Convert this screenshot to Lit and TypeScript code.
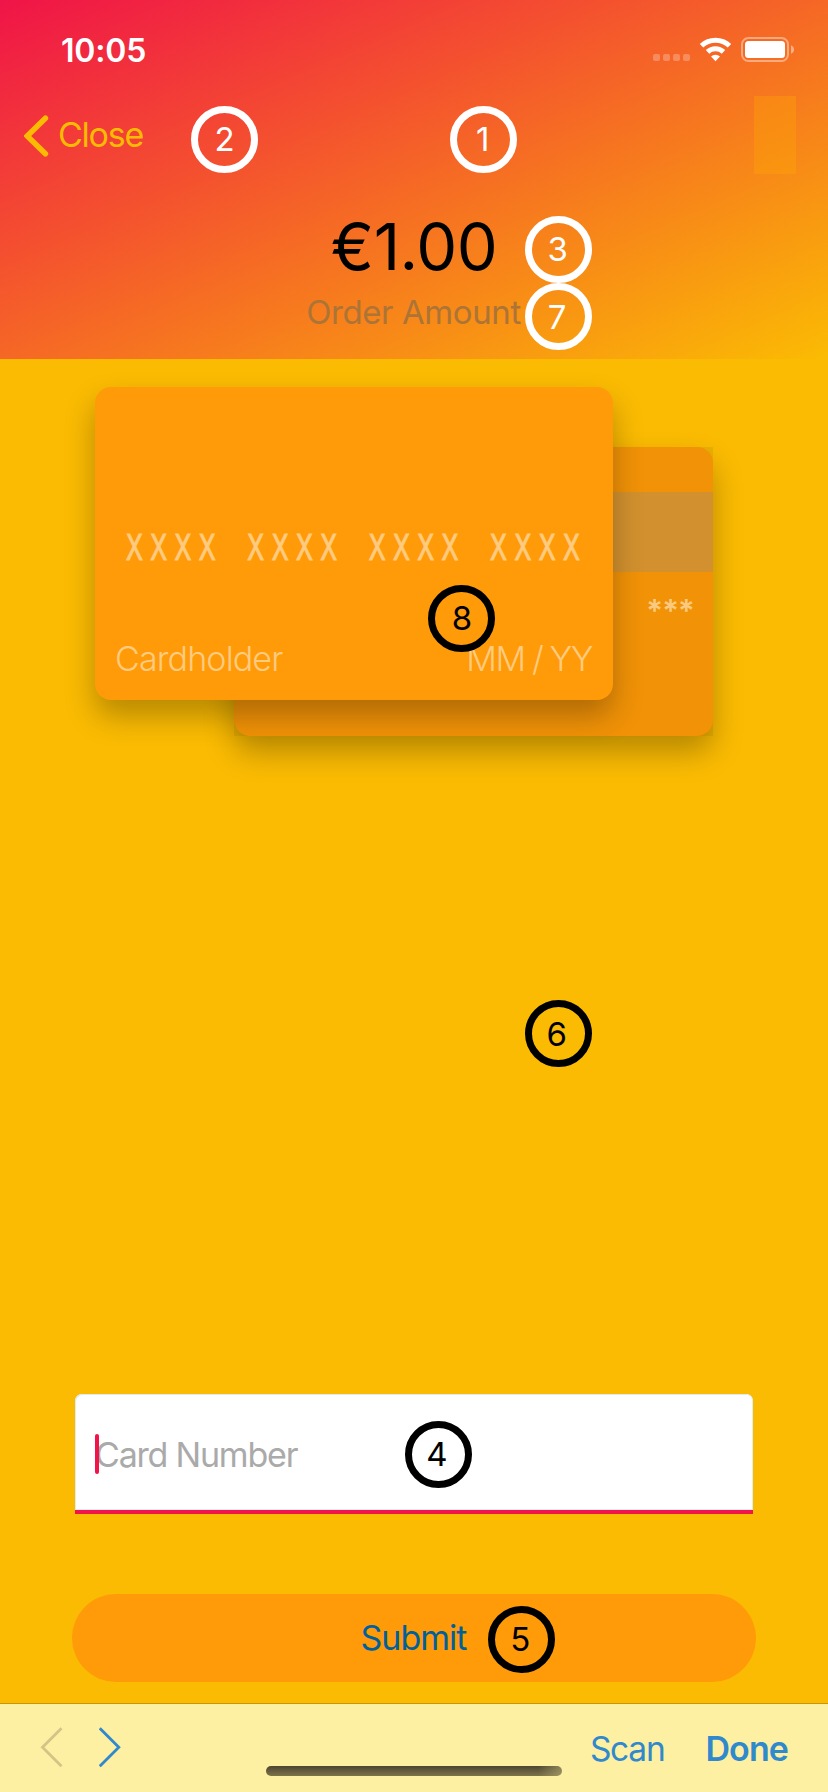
import { LitElement, html, css } from "lit";
import { customElement } from "lit/decorators.js";
import { styleMap } from "lit/directives/style-map.js";

interface Marker { n: number; x: number; y: number; dx: number; dark?: boolean }

const markers: Marker[] = [
  { n: 1, x: 483.7, y: 139.3, dx: -1 },
  { n: 2, x: 224.5, y: 139.3, dx: 0 },
  { n: 3, x: 558.2, y: 249.2, dx: -0.5 },
  { n: 7, x: 558.5, y: 316.7, dx: -1.5 },
  { n: 8, x: 461.5, y: 618, dx: 0.5, dark: true },
  { n: 6, x: 558.3, y: 1033.5, dx: -1.5, dark: true },
  { n: 4, x: 438.5, y: 1454.3, dx: -1.5, dark: true },
  { n: 5, x: 521.3, y: 1639.3, dx: -1, dark: true },
];

@customElement("app-root")
export class AppRoot extends LitElement {
  static styles = css`
    :host {
      display: flex;
      flex-direction: column;
      position: relative;
      width: 828px;
      height: 1792px;
      overflow: hidden;
      background: #fbbb03;
      font-family: Inter, "Liberation Sans", sans-serif;
      font-size: 34px;
      line-height: 40px;
      white-space: nowrap;
    }
    * { box-sizing: border-box; }
    svg { display: block; flex: none; }
    header {
      height: 359px;
      display: flex;
      flex-direction: column;
      align-items: center;
      background: linear-gradient(to bottom right, #f01448, #fbbb03);
    }
    .status {
      align-self: stretch;
      height: 96px;
      padding: 30px 33px 0 61px;
      display: flex;
      justify-content: space-between;
      color: #fff;
      font-size: 32px;
      font-weight: 600;
    }
    .status span { padding-top: 1px; letter-spacing: -0.2px; }
    .nav {
      align-self: stretch;
      height: 78px;
      padding: 0 32px 0 24px;
      display: flex;
      justify-content: space-between;
      color: #fbbb03;
    }
    .back { display: flex; align-items: center; gap: 9px; letter-spacing: -1.25px; }
    .back svg { margin-top: 1px; }
    .action { width: 42px; background: rgba(255, 172, 0, 0.3); }
    .amount {
      margin-top: 33px;
      font-size: 65px;
      line-height: 80px;
      letter-spacing: -0.5px;
      color: #000;
    }
    .caption {
      margin: 5px 1px 0 0;
      font-size: 33px;
      letter-spacing: -0.4px;
      color: #ac7437;
    }
    main { flex: 1; display: flex; flex-direction: column; padding-top: 28px; }
    .cards {
      display: grid;
      justify-items: start;
      align-items: start;
      padding-left: 95px;
      height: 1007px;
    }
    .card { grid-area: 1 / 1; border-radius: 16px; box-shadow: 0 16px 30px rgba(0, 0, 0, 0.27); }
    .rear { width: 479px; height: 289px; margin: 60px 0 0 139px; background: #ff9b08; }
    .shade { height: 289px; padding-top: 45px; background: rgba(0, 0, 0, 0.055); text-align: right; }
    .stripe { height: 80px; background: rgba(130, 143, 148, 0.28); }
    .cvv { margin: 19px 19px 0 0; font-size: 31px; font-weight: 600; letter-spacing: -0.8px; color: #fbca81; }
    .front {
      width: 518px;
      height: 313px;
      padding: 143px 19px 0 20px;
      background: #ff9b08;
      color: #ffcb80;
      font-weight: 350;
    }
    .number {
      margin-left: 10.5px;
      width: 600px;
      font: 400 38px/40px "Liberation Mono", monospace;
      letter-spacing: 10px;
      -webkit-text-stroke: 0.9px #ffcb80;
      transform: scaleX(0.74);
      transform-origin: left;
    }
    .holder { display: flex; justify-content: space-between; margin-top: 69px; letter-spacing: -0.85px; }
    .expiry { margin-right: 2px; letter-spacing: -1.4px; word-spacing: -1px; }
    .field {
      width: 678px;
      height: 120px;
      margin-left: 75px;
      padding: 4px 20px 0;
      display: flex;
      align-items: center;
      background: #fff;
      border-bottom: 4px solid #f01448;
      border-radius: 7px 7px 0 0;
      box-shadow: inset 1px 1px #d9edf3, inset -1px -1px #d9edf3;
      color: #aaa;
      letter-spacing: -1.2px;
    }
    .caret { width: 4px; height: 40px; border-radius: 2px; background: #f01448; z-index: 1; }
    .field span { margin: 1px 0 0 -4px; }
    .submit {
      width: 684px;
      height: 88px;
      margin: 80px 0 0 72px;
      padding: 0 1px 1px 0;
      display: flex;
      align-items: center;
      justify-content: center;
      border-radius: 44px;
      background: #ff9b08;
      color: #00609c;
      letter-spacing: -1px;
    }
    footer {
      height: 89px;
      padding: 23px 40px 0;
      display: flex;
      align-items: flex-start;
      border-top: 1px solid #c8960a;
      background: #fdf0a2;
      color: #3088cd;
    }
    .next { margin-left: 36px; }
    .scan { margin-left: auto; padding-top: 2px; font-size: 33.5px; letter-spacing: -1.25px; }
    .done { margin-left: 41px; padding-top: 2px; font-weight: 600; letter-spacing: -0.9px; }
    .home {
      position: absolute;
      left: 266px;
      top: 1766px;
      width: 296px;
      height: 10px;
      border-radius: 5px;
      background:
        linear-gradient(to right, transparent 92%, rgba(175, 165, 110, 0.65)),
        linear-gradient(#4c4632, #7d7249);
    }
    .marker {
      position: absolute;
      width: 67px;
      height: 67px;
      margin: -33.5px 0 0 -33.5px;
      border: 7px solid;
      border-radius: 50%;
      display: flex;
      align-items: center;
      justify-content: center;
      color: #fff;
      font-size: 33px;
    }
    .marker.dark { color: #000; }
  `;

  render() {
    return html`
      <header>
        <div class="status">
          <span>10:05</span>
          <svg width="142" height="40" viewBox="653 30 142 40" fill="#fff">
            <g fill-opacity=".25">
              <rect x="653" y="54" width="7" height="7" rx="2" />
              <rect x="663" y="54" width="7" height="7" rx="2" />
              <rect x="673" y="54" width="7" height="7" rx="2" />
              <rect x="683" y="54" width="7" height="7" rx="2" />
            </g>
            <g fill="none" stroke="#fff" stroke-width="5">
              <path d="M701.5 45.8a20.2 20.2 0 0 1 28 0" />
              <path d="M707.5 51.9a11.7 11.7 0 0 1 16 0" />
            </g>
            <path d="M711 56.6a6.6 6.6 0 0 1 9 0L715.5 61.2z" />
            <rect x="742" y="38" width="46" height="23" rx="6.5" fill="none" stroke="#fff" stroke-opacity=".42" stroke-width="2" />
            <rect x="745" y="41" width="40" height="17" rx="3.5" />
            <path d="M791 45.2q3 1.3 3 4.3t-3 4.3z" fill-opacity=".45" />
          </svg>
        </div>
        <div class="nav">
          <div class="back">
            <svg width="25" height="42" viewBox="0 0 25 42">
              <path d="M21.4 3.2 3.2 21l18.2 17.8" fill="none" stroke="#fbbb03" stroke-width="5.6" stroke-linecap="round" />
            </svg>
            <span>Close</span>
          </div>
          <div class="action"></div>
        </div>
        <div class="amount">€1.00</div>
        <div class="caption">Order Amount</div>
      </header>
      <main>
        <div class="cards">
          <div class="card rear">
            <div class="shade">
              <div class="stripe"></div>
              <div class="cvv">***</div>
            </div>
          </div>
          <div class="card front">
            <div class="number">XXXX XXXX XXXX XXXX</div>
            <div class="holder"><span>Cardholder</span><span class="expiry">MM / YY</span></div>
          </div>
        </div>
        <div class="field"><i class="caret"></i><span>Card Number</span></div>
        <div class="submit">Submit</div>
      </main>
      <footer>
        <svg width="23" height="42" viewBox="0 0 23 42">
          <path d="M21.5 1.3 2.5 20.3l19 19" fill="none" stroke="#d3c489" stroke-width="2.8" />
        </svg>
        <svg class="next" width="23" height="42" viewBox="0 0 23 42">
          <path d="M.8 1.3l19 19-19 19" fill="none" stroke="#3088cd" stroke-width="2.8" />
        </svg>
        <span class="scan">Scan</span>
        <span class="done">Done</span>
      </footer>
      <div class="home"></div>
      ${markers.map((m) => html`
        <div class="marker ${m.dark ? "dark" : ""}"
          style=${styleMap({ left: `${m.x}px`, top: `${m.y}px`, textIndent: `${m.dx * 2}px` })}>${m.n}</div>`)}
    `;
  }
}
